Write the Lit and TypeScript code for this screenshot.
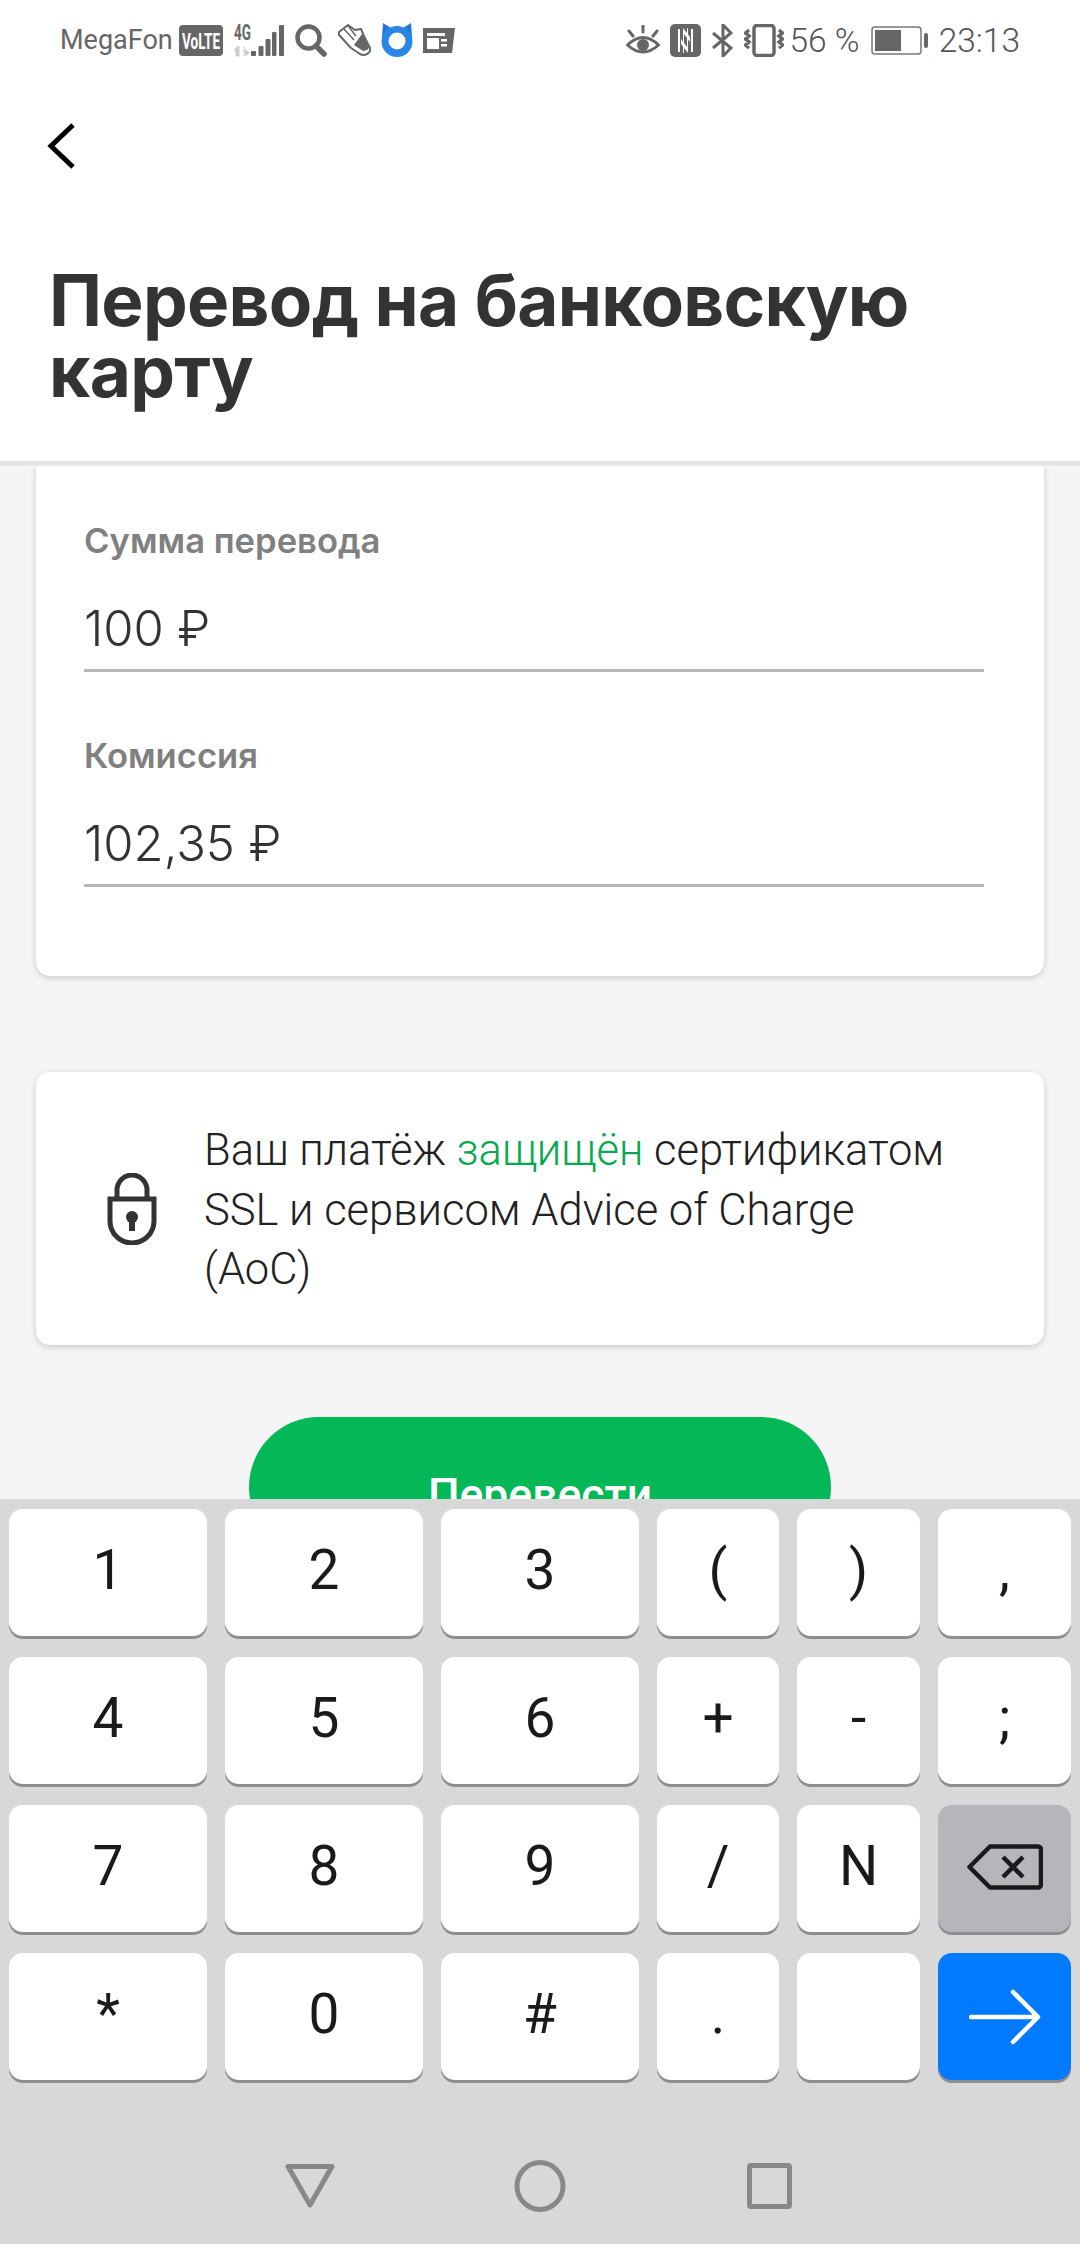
import { LitElement, html, css, svg } from "lit";
import { customElement } from "lit/decorators.js";

const KEYS = ["1","2","3","(",")",",","4","5","6","+","-",";","7","8","9","/","N","DEL","*","0","#",".","","GO"];

@customElement("app-root")
export class AppRoot extends LitElement {
  static styles = css`
    :host { display: block; width: 1080px; height: 2244px; overflow: hidden; font-family: Roboto, sans-serif; background: #f5f5f5; }
    .page { display: flex; flex-direction: column; height: 2244px; }
    .status { height: 80px; flex: none; display: flex; align-items: center; padding: 0 60px 0 60px; background: #fff; color: #666; box-sizing: border-box; }
    .status svg { display: block; flex: none; }
    .carrier { font-size: 27px; margin-right: 6px; }
    .spacer { flex: 1; }
    .stext { font-size: 33.5px; font-weight: 300; color: #555; }
    .head { flex: none; height: 386px; box-sizing: border-box; background: #fff; border-bottom: 5px solid #e6e6e6; padding: 42px 0 0 46px; }
    .back { display: block; }
    h1 { margin: 95px 0 0 3px; font: 700 71px/71px Inter, sans-serif; color: #333; letter-spacing: -0.7px; }
    .content { flex: 1; min-height: 0; overflow: hidden; background: #f5f5f5; padding: 0 36px; }
    .card { background: #fff; border-radius: 0 0 14px 14px; box-shadow: 0 2px 6px rgba(0,0,0,.18); }
    .fields { height: 510px; box-sizing: border-box; padding: 54px 60px 0 48px; }
    .label { font: 600 34.6px/40px Inter, sans-serif; color: #808080; }
    .value { margin-top: 37px; height: 75px; box-sizing: border-box; border-bottom: 3px solid #b8b8b8; font: 300 49px/64px Inter, sans-serif; color: #333; }
    .field + .field { margin-top: 63px; }
    .info { margin-top: 96px; height: 273px; border-radius: 14px; display: flex; align-items: center; padding: 0 40px 0 71px; }
    .info svg { flex: none; margin-right: 47px; }
    .info p { margin: 0; padding-top: 4px; width: 750px; font: 300 43.5px/59.5px Roboto, sans-serif; color: #222; }
    .info em { font-style: normal; color: #08a84f; }
    .pay { margin: 72px auto 0; width: 582px; height: 140px; border-radius: 70px; background: #04b858; color: #fff; font: 500 44.5px/1 Roboto, sans-serif; text-align: center; padding-top: 56px; box-sizing: border-box; }
    .kbd { flex: none; height: 745px; box-sizing: border-box; background: #d8d8d8; padding-top: 10px; }
    .grid { margin: 0 9px; display: grid; grid-template-columns: 198px 198px 198px 122px 123px 133px; grid-auto-rows: 127px; column-gap: 18px; row-gap: 21px; }
    .key { background: #fff; border-radius: 14px; box-shadow: 0 3px 0 #8e8e92; display: flex; align-items: center; justify-content: center; padding-bottom: 4px; box-sizing: border-box; font: 400 55px/1 Roboto, sans-serif; color: #1a1a1a; }
    .key.del { background: #b4b6bb; }
    .key.go { background: #007aff; padding-bottom: 0; }
    .navicons { display: block; margin-top: 71px; }
  `;

  private statusLeft() {
    return html`
      <span class="carrier">MegaFon</span>
      <svg width="44" height="31" viewBox="0 0 44 31" style="margin-right:11px"><rect width="44" height="31" rx="4" fill="#666"/><text x="22" y="23.500" text-anchor="middle" font-family="Roboto" font-weight="700" font-size="22" fill="#fff" textLength="38" lengthAdjust="spacingAndGlyphs">VoLTE</text></svg>
      <svg width="50" height="33" viewBox="0 0 50 33" style="margin-right:11px">
        <text x="0" y="16" font-family="Roboto" font-weight="700" font-size="22" fill="#666" textLength="17" lengthAdjust="spacingAndGlyphs">4G</text>
        <path d="M1 25l4-3v10H2v-5l-1 1zM10 22v10" fill="#ccc" stroke="#ccc" stroke-width="1"/><path d="M11 25l5 4-5 3z" fill="#ccc"/>
        <g fill="#666"><rect x="17" y="27" width="5" height="5" rx="1"/><rect x="24.500" y="22" width="5" height="10" rx="1"/><rect x="31.500" y="15" width="5" height="17" rx="1"/><rect x="38" y="8" width="4.500" height="24" rx="1"/><rect x="45" y="1" width="5" height="31" rx="1"/></g>
      </svg>
      <svg width="32" height="33" viewBox="0 0 32 33" style="margin-right:11px"><circle cx="13.500" cy="13.500" r="11" fill="none" stroke="#666" stroke-width="4.500"/><path d="M21 22l8 8" stroke="#666" stroke-width="5.500" stroke-linecap="round"/></svg>
      <svg width="33" height="33" viewBox="-1 0 33 33" style="margin-right:10px"><path d="M0 8L9 1l7 5 6-1 3 7 6 12q1 4-3 6-3 2-7 0L12 24 1 12q-2-2-1-4z" fill="#fff" stroke="#666" stroke-width="2" stroke-linejoin="round"/><path d="M5 5l10 11M10 3l7 9" stroke="#666" stroke-width="1.500"/><path d="M15 21l8-11 7 13q0 2-2 3l-4 1z" fill="#666"/></svg>
      <svg width="32" height="34" viewBox="0 0 32 34" style="margin-right:10px"><path d="M2 0l8 5h12l8-5 1 14H1z" fill="#2277d8"/><circle cx="16" cy="18.500" r="15.500" fill="#2a86e6"/><circle cx="16" cy="18" r="8.500" fill="#fff"/></svg>
      <svg width="32" height="25" viewBox="0 0 32 25"><path d="M0 0h32l-3 25H0z" fill="#666"/><rect x="4" y="5" width="18" height="3" fill="#fff"/><rect x="4" y="10" width="12" height="11" fill="#fff"/><rect x="18" y="11" width="6" height="2.500" fill="#fff"/><rect x="18" y="16" width="6" height="2.500" fill="#fff"/></svg>
    `;
  }

  private statusRight() {
    return html`
      <svg width="34" height="31" viewBox="0 0 34 31" style="margin-right:10px"><path d="M1.500 20q15.500-15 31 0-15.500 14-31 0z" fill="none" stroke="#666" stroke-width="3"/><circle cx="17" cy="20" r="6" fill="#666"/><path d="M17 1v6M3 6l4 5M31 6l-4 5" stroke="#666" stroke-width="3" stroke-linecap="round"/></svg>
      <svg width="31" height="33" viewBox="0 0 31 33" style="margin-right:11px"><rect width="31" height="33" rx="5" fill="#666"/><path d="M8 5h2v23H8zM13 4l7 9v5l-6-8v19h-1z" fill="#fff"/><path d="M21 5h2v23h-2zM18 29l-7-9v-5l6 8V4h1z" fill="#fff"/></svg>
      <svg width="21" height="33" viewBox="0 0 21 33" style="margin-right:11px"><path d="M1 9l18 15-8 8V1l8 8L1 24" fill="none" stroke="#666" stroke-width="3"/></svg>
      <svg width="40" height="33" viewBox="0 0 40 33" style="margin-right:6px"><rect x="10" y="1.500" width="20" height="30" rx="3" fill="none" stroke="#666" stroke-width="3.500"/><path d="M5 6L1.500 9 5 12l-3.500 3L5 18l-3.500 3L5 24M35 6l3.500 3L35 12l3.500 3L35 18l3.500 3L35 24" fill="none" stroke="#666" stroke-width="3.500"/></svg>
      <span class="stext">56 %</span>
      <svg width="58" height="29" viewBox="0 0 58 29" style="margin:0 10px 0 11px"><rect x="1" y="1" width="49" height="27" rx="3" fill="none" stroke="#777" stroke-width="1.500"/><rect x="4" y="4" width="26" height="21" fill="#666"/><rect x="53" y="7" width="4" height="15" rx="2" fill="#666"/></svg>
      <span class="stext">23:13</span>
    `;
  }

  private keyContent(k: string) {
    if (k === "DEL") return svg`<svg width="76" height="46" viewBox="0 0 76 46"><path d="M23 2.500h48a3 3 0 0 1 3 3v35a3 3 0 0 1-3 3H23L2.500 23z" fill="none" stroke="#1a1a1a" stroke-width="4.500" stroke-linejoin="round"/><path d="M36 13l20 20M56 13L36 33" stroke="#1a1a1a" stroke-width="4.500"/></svg>`;
    if (k === "GO") return svg`<svg width="72" height="56" viewBox="0 0 72 56"><path d="M2 28h66M44 3l25 25-25 25" fill="none" stroke="#fff" stroke-width="4.500" stroke-linecap="round" stroke-linejoin="round"/></svg>`;
    return k;
  }

  render() {
    return html`<div class="page">
      <div class="status">${this.statusLeft()}<span class="spacer"></span>${this.statusRight()}</div>
      <div class="head">
        <svg class="back" width="30" height="48" viewBox="0 0 30 48"><path d="M27 3L5 24l22 21" fill="none" stroke="#000" stroke-width="5"/></svg>
        <h1>Перевод на банковскую<br>карту</h1>
      </div>
      <div class="content">
        <div class="card fields">
          <div class="field"><div class="label">Сумма перевода</div><div class="value">100 ₽</div></div>
          <div class="field"><div class="label">Комиссия</div><div class="value">102,35 ₽</div></div>
        </div>
        <div class="card info">
          <svg width="50" height="72" viewBox="0 0 50 72"><path d="M10 27V17a15 15 0 0 1 30 0v10" fill="none" stroke="#333" stroke-width="5"/><path d="M3 26h44v22a22 22 0 0 1-44 0z" fill="none" stroke="#333" stroke-width="5"/><circle cx="25" cy="44" r="6" fill="#333"/><rect x="22" y="45" width="6" height="13" fill="#333"/></svg>
          <p>Ваш платёж <em>защищён</em> сертификатом SSL и сервисом Advice of Charge (AoC)</p>
        </div>
        <div class="pay">Перевести</div>
      </div>
      <div class="kbd">
        <div class="grid">${KEYS.map(k => html`<div class="key ${k === "DEL" ? "del" : k === "GO" ? "go" : ""}">${this.keyContent(k)}</div>`)}</div>
        <svg class="navicons" width="1080" height="70" viewBox="0 0 1080 70">
          <path d="M288 15.500h44L310 54z" fill="none" stroke="#888" stroke-width="5" stroke-linejoin="round"/>
          <ellipse cx="540" cy="35" rx="23" ry="23.500" fill="none" stroke="#888" stroke-width="5"/>
          <rect x="749.500" y="14.500" width="40" height="41" rx="1.500" fill="none" stroke="#888" stroke-width="5"/>
        </svg>
      </div>
    </div>`;
  }
}
